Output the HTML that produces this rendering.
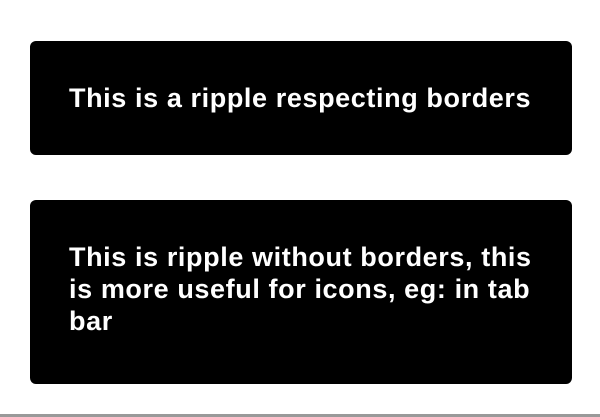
<!DOCTYPE html>
<html><head><style>
html,body{margin:0;padding:0;background:#fff;width:600px;height:417px;overflow:hidden;font-family:"Liberation Sans",sans-serif;}
.b{position:absolute;left:30px;width:542px;background:#000;border-radius:6px;color:#fff;font-weight:bold;font-size:27px;letter-spacing:0.6px;line-height:32px;}
.t{position:absolute;left:39px;white-space:nowrap;}
.line{position:absolute;left:0;top:414px;width:600px;height:3px;background:#999;}
</style></head><body>
<div class="b" style="top:41px;height:114px;"><div class="t" style="top:41px">This is a ripple respecting borders</div></div>
<div class="b" style="top:200px;height:184px;"><div class="t" style="top:41px">This is ripple without borders, this<br>is more useful for icons, eg: in tab<br>bar</div></div>
<div class="line"></div>
</body></html>
